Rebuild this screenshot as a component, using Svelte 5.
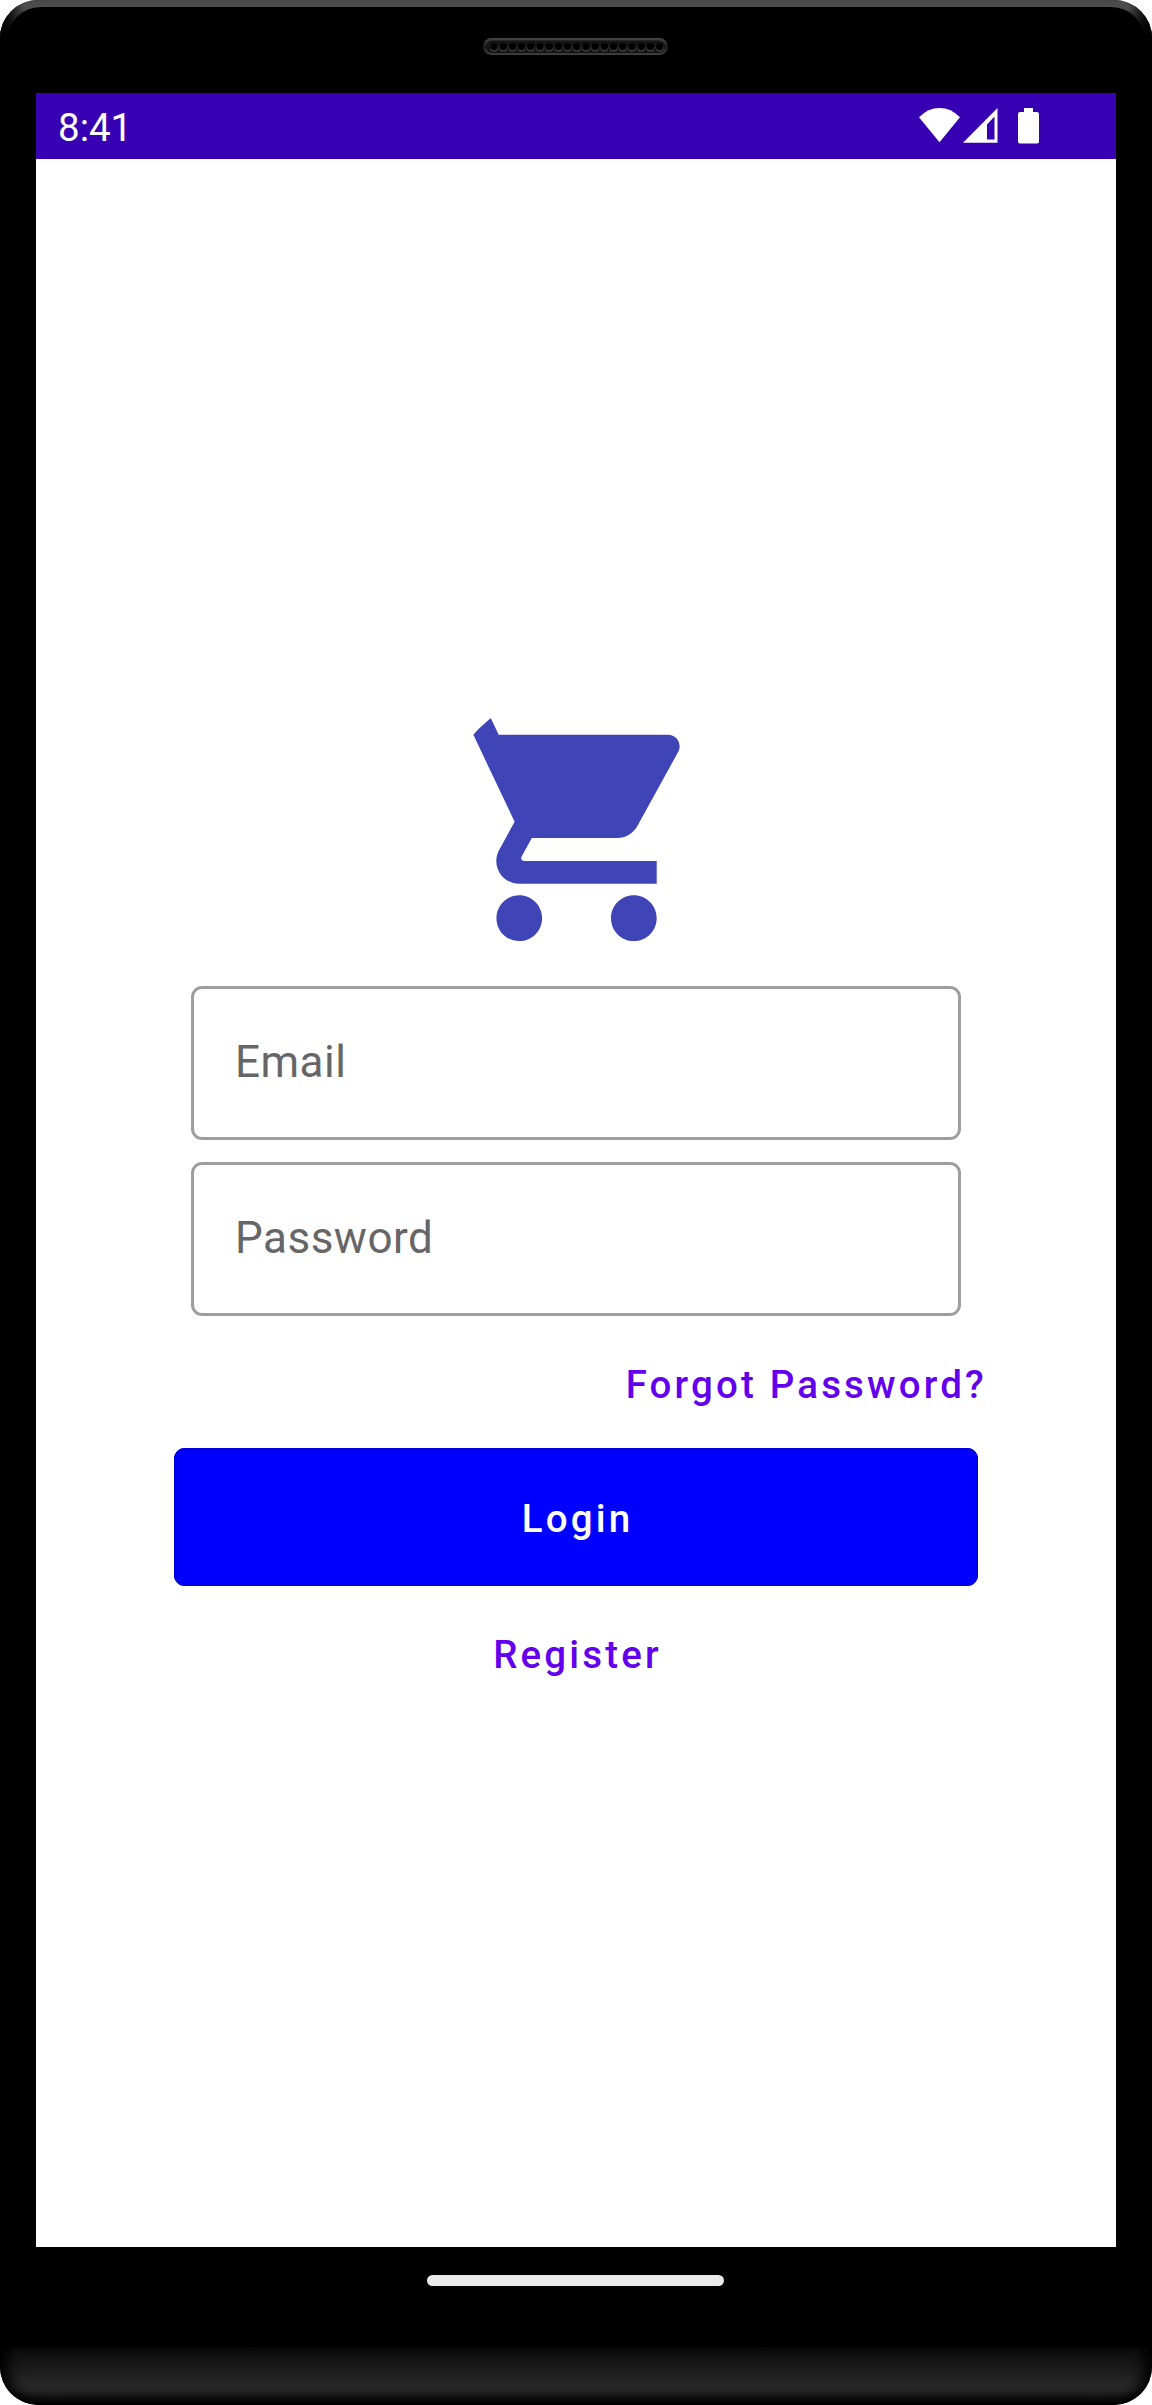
<script>
  const holes = Array.from({ length: 19 }, (_, i) => 11 + i * 9.2);
</script>

<div class="phone">
  <header class="bezel-top">
    <div class="rim"><div class="rim-inner"></div></div>
    <svg class="speaker" width="185" height="17" viewBox="0 0 185 17">
      <defs>
        <linearGradient id="rimShade" x1="0" y1="0" x2="0" y2="1">
          <stop offset="0" stop-color="#484848" />
          <stop offset="0.5" stop-color="#1c1c1c" />
          <stop offset="1" stop-color="#404040" />
        </linearGradient>
      </defs>
      <rect width="185" height="17" rx="8.5" fill="url(#rimShade)" />
      <rect x="3" y="2.5" width="179" height="12.5" rx="6.2" fill="#151515" />
      {#each holes as x}
        <circle cx={x} cy="9.5" r="4" fill="#484848" />
        <circle cx={x} cy="8.6" r="3.7" fill="#000" />
      {/each}
    </svg>
  </header>

  <div class="screen">
    <div class="status">
      <span class="time">8:41</span>
      <svg class="status-icons" width="122" height="37" viewBox="0 0 122 37">
        <path d="M0 9.3Q9 0 20.5 0T41 9.3L20.5 34.3Z" fill="#fff" />
        <path
          d="M78.500 0V34.700H44ZM75.500 8.500L68 16.500V31.500H75.500Z"
          fill="#fff"
          fill-rule="evenodd"
        />
        <path
          d="M105 0h9v4h4a2 2 0 0 1 2 2v27.500a2 2 0 0 1-2 2H101a2 2 0 0 1-2-2V6a2 2 0 0 1 2-2h4Z"
          fill="#fff"
        />
      </svg>
    </div>

    <main>
      <svg class="cart" width="275" height="275" viewBox="0 0 24 24" fill="#3f45b6">
        <path
          d="M7 18c-1.100 0-1.990.9-1.990 2S5.900 22 7 22s2-.9 2-2-.9-2-2-2zM1 2v2h2l3.600 7.590-1.350 2.450c-.16.28-.25.61-.25.96 0 1.100.9 2 2 2h12v-2H7.420c-.14 0-.25-.11-.25-.25l.03-.12.9-1.630h7.450c.75 0 1.410-.41 1.750-1.030l3.580-6.490c.08-.14.12-.31.12-.48 0-.55-.45-1-1-1H5.210l-.94-2H1zm16 16c-1.100 0-1.990.9-1.990 2s.89 2 1.990 2 2-.9 2-2-.9-2-2-2z"
        />
      </svg>
      <div class="field email"><span>Email</span></div>
      <div class="field password"><span>Password</span></div>
      <a class="link forgot" href="#forgot">Forgot Password?</a>
      <button class="login" type="button">Login</button>
      <a class="link register" href="#register">Register</a>
    </main>
  </div>

  <div class="nav"><div class="pill"></div></div>
  <div class="chin"></div>
</div>

<style>
  :global(body) {
    margin: 0;
    background: #fff;
  }
  .phone {
    width: 1152px;
    height: 2405px;
    display: flex;
    flex-direction: column;
    background: #000;
    border-radius: 38px;
    overflow: hidden;
    font-family: Roboto, "Liberation Sans", sans-serif;
  }
  .bezel-top {
    position: relative;
    height: 93px;
    display: flex;
    justify-content: center;
    align-items: flex-start;
  }
  .rim {
    position: absolute;
    inset: 0 0 auto 0;
    height: 44px;
    padding: 7px 7px 0;
    box-sizing: border-box;
    background:
      linear-gradient(90deg, #000 3px, transparent 24px),
      linear-gradient(270deg, #000 3px, transparent 24px),
      linear-gradient(#484848, #4e4e4e 7px, #000 43px);
  }
  .rim-inner {
    height: 37px;
    background: #000;
    border-radius: 34px 34px 0 0;
  }
  .speaker {
    position: relative;
    margin: 38px 1px 0 0;
    display: block;
  }
  .screen {
    margin: 0 36px;
    height: 2154px;
    background: #fff;
    display: flex;
    flex-direction: column;
  }
  .status {
    height: 66px;
    background: #3700b3;
    display: flex;
    justify-content: space-between;
    padding: 0 75px 0 22px;
  }
  .time {
    color: #fff;
    font-size: 38.5px;
    line-height: 70px;
  }
  .status-icons {
    margin-top: 15px;
    display: block;
  }
  main {
    flex: 1;
    display: flex;
    flex-direction: column;
    align-items: center;
  }
  .cart {
    display: block;
    margin-top: 529.5px;
    clip-path: circle(50%);
  }
  .field {
    width: 770px;
    height: 154px;
    box-sizing: border-box;
    border: 3px solid #9e9e9e;
    border-radius: 11px;
    padding: 0 0 2px 41px;
    display: flex;
    align-items: center;
    color: #666;
    font-size: 44px;
    line-height: 52px;
    letter-spacing: 0.5px;
  }
  .email {
    margin-top: 22.5px;
  }
  .password {
    margin-top: 22px;
  }
  .link,
  .login {
    font-family: inherit;
    font-size: 38.5px;
    font-weight: 500;
    line-height: 46px;
    letter-spacing: 3.16px;
    text-decoration: none;
  }
  .link {
    color: #6200ee;
    white-space: nowrap;
  }
  .forgot {
    align-self: flex-end;
    margin: 46px 129px 0 0;
  }
  .login {
    width: 804px;
    height: 138px;
    box-sizing: border-box;
    margin-top: 40px;
    padding: 4px 0 0 3px;
    border: 0;
    border-radius: 11px;
    background: #00f;
    box-shadow: inset 0 0 0 2.5px #0000e0;
    color: #fff;
  }
  .register {
    margin-top: 46px;
    padding-left: 3px;
  }
  .nav {
    height: 100px;
    display: flex;
    justify-content: center;
    align-items: flex-start;
  }
  .pill {
    width: 297px;
    height: 11px;
    margin-top: 27.5px;
    margin-right: 1px;
    border-radius: 6px;
    background: #eaeaea;
  }
  .chin {
    height: 58px;
    border-radius: 0 0 38px 38px;
    background: linear-gradient(#0b0b0b, #262626 36px, #262626 43px, #000 57px);
    box-shadow: inset 14px 0 14px -6px #000, inset -14px 0 14px -6px #000;
  }
</style>
